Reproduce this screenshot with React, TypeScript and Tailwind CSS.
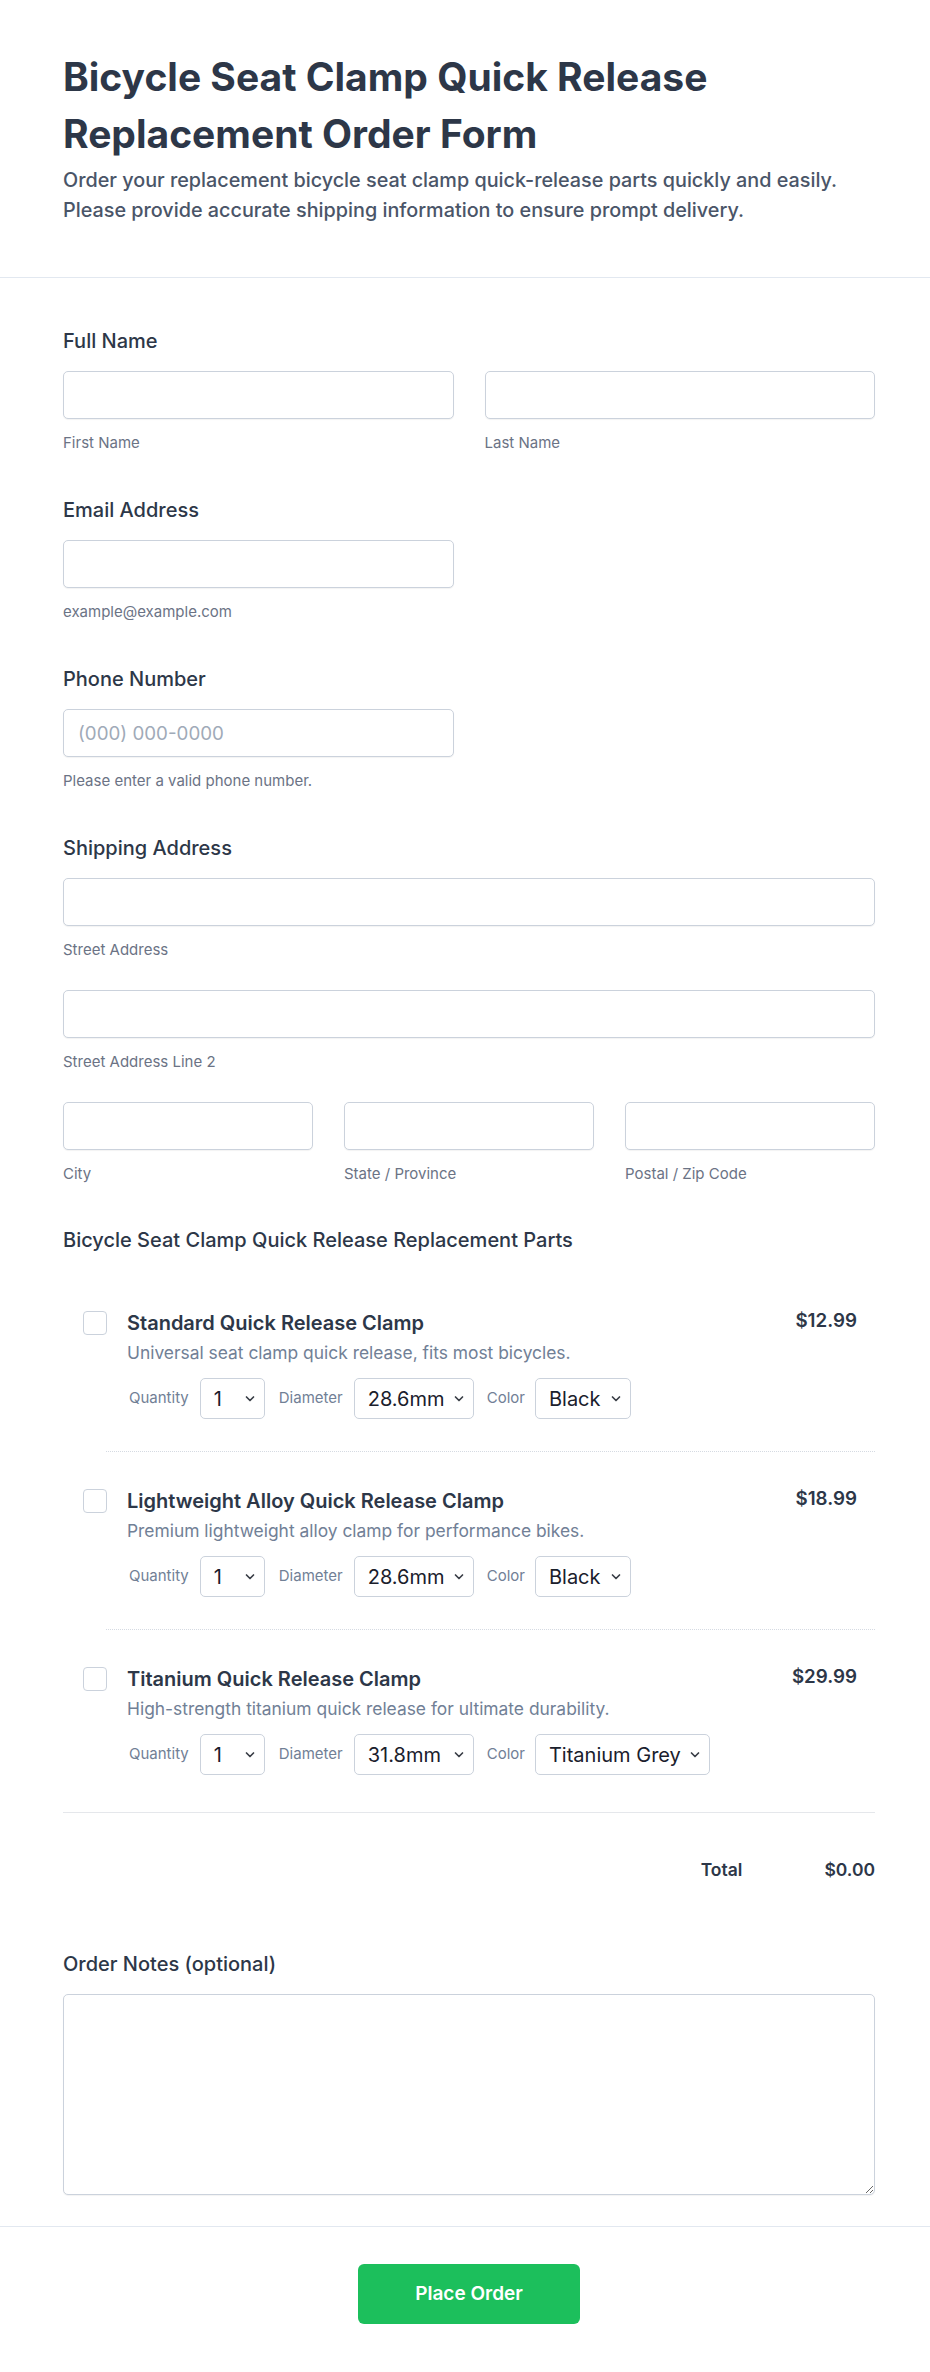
import React from "react";

type Part = {
  id: string;
  name: string;
  description: string;
  price: string;
  diameter: string;
  color: string;
  colorWidth: string;
};

const parts: Part[] = [
  {
    id: "standard",
    name: "Standard Quick Release Clamp",
    description: "Universal seat clamp quick release, fits most bicycles.",
    price: "$12.99",
    diameter: "28.6mm",
    color: "Black",
    colorWidth: "w-[96px]",
  },
  {
    id: "alloy",
    name: "Lightweight Alloy Quick Release Clamp",
    description: "Premium lightweight alloy clamp for performance bikes.",
    price: "$18.99",
    diameter: "28.6mm",
    color: "Black",
    colorWidth: "w-[96px]",
  },
  {
    id: "titanium",
    name: "Titanium Quick Release Clamp",
    description: "High-strength titanium quick release for ultimate durability.",
    price: "$29.99",
    diameter: "31.8mm",
    color: "Titanium Grey",
    colorWidth: "w-[175px]",
  },
];

const inputCls =
  "block h-12 w-full rounded-[5px] border border-[#cbd2dc] bg-white px-[14px] text-[18.75px] text-[#1a202c] shadow-[0_1px_1px_rgba(0,0,0,0.05)] outline-none placeholder:text-[#a0aab8]";

function Label({ children }: { children: React.ReactNode }) {
  return (
    <div className="mb-[15px] text-[20px] font-medium leading-[30px] text-[#2d3748]">
      {children}
    </div>
  );
}

function Sub({ children }: { children: React.ReactNode }) {
  return <div className="mt-[13px] text-[15px] leading-[22px] text-[#6b7385]">{children}</div>;
}

function Chevron() {
  return (
    <svg width="10" height="7" viewBox="0 0 10 7" fill="none" className="text-[#3a3f47]">
      <path d="M1.5 1.5 5 5l3.5-3.5" stroke="currentColor" strokeWidth="1.7" strokeLinecap="round" strokeLinejoin="round" />
    </svg>
  );
}

function Select({ value, options, width }: { value: string; options: string[]; width: string }) {
  return (
    <div className={`relative ${width}`}>
      <select
        defaultValue={value}
        className="block h-[41px] w-full appearance-none rounded-[5px] border border-[#cbd2dc] bg-white pl-[13px] pr-[26px] text-[20px] text-[#1a202c] outline-none"
      >
        {options.map((o) => (
          <option key={o}>{o}</option>
        ))}
      </select>
      <span className="pointer-events-none absolute right-[10px] top-1/2 -translate-y-1/2">
        <Chevron />
      </span>
    </div>
  );
}

function PartRow({ part, index }: { part: Part; index: number }) {
  const isLast = index === parts.length - 1;
  return (
    <div className={isLast ? "" : "border-b border-dotted border-[#d5dae2] ml-[43px]"}>
      <div className={`flex gap-5 pt-[35px] pb-[32px] pr-[18px] ${isLast ? "pl-5" : "-ml-[23px]"}`}>
        <input
          type="checkbox"
          className="mt-[2px] h-6 w-6 shrink-0 appearance-none rounded-[4px] border border-[#cbd2dc] bg-white"
        />
        <div className="flex-1">
          <div className="flex items-start justify-between">
            <div className="text-[20px] font-semibold leading-[28px] text-[#2d3748]">{part.name}</div>
            <div className="text-[18.75px] font-semibold leading-[24px] text-[#2d3748]">{part.price}</div>
          </div>
          <div className="mt-[2px] text-[17.4px] leading-[28px] text-[#718096]">{part.description}</div>
          <div className="mt-[11px] flex items-center text-[15px] text-[#718096]">
            <span className="ml-[2px] mr-[11px]">Quantity</span>
            <Select value="1" options={["1", "2", "3", "4", "5"]} width="w-[65px]" />
            <span className="ml-[14px] mr-[11px]">Diameter</span>
            <Select value={part.diameter} options={["25.4mm", "28.6mm", "31.8mm", "34.9mm"]} width="w-[120px]" />
            <span className="ml-[13px] mr-[10px]">Color</span>
            <Select
              value={part.color}
              options={part.color === "Black" ? ["Black", "Silver", "Red"] : ["Titanium Grey", "Natural"]}
              width={part.colorWidth}
            />
          </div>
        </div>
      </div>
    </div>
  );
}

export default function App() {
  return (
    <div className="min-h-[2372px] bg-white font-[family-name:Inter,sans-serif] text-[#2d3748]">
      <header className="border-b border-[#e2e8f0] pb-[52px] pl-[63px] pr-[55px] pt-12">
        <h1 className="text-[39px] font-bold leading-[57px] text-[#2d3748]">
          Bicycle Seat Clamp Quick Release
          <br />
          Replacement Order Form
        </h1>
        <p className="mt-[3px] text-[19.8px] font-medium leading-[30px] text-[#4a5568]">
          Order your replacement bicycle seat clamp quick-release parts quickly and easily.
          <br />
          Please provide accurate shipping information to ensure prompt delivery.
        </p>
      </header>

      <form className="pb-[31px] pl-[63px] pr-[55px] pt-12" onSubmit={(e) => e.preventDefault()}>
        <div className="flex flex-col gap-[41px]">
          <div>
            <Label>Full Name</Label>
            <div className="grid grid-cols-2 gap-x-[31px]">
              <div>
                <input className={inputCls} />
                <Sub>First Name</Sub>
              </div>
              <div>
                <input className={inputCls} />
                <Sub>Last Name</Sub>
              </div>
            </div>
          </div>

          <div>
            <Label>Email Address</Label>
            <div className="grid grid-cols-2 gap-x-[31px]">
              <div>
                <input type="email" className={inputCls} />
                <Sub>example@example.com</Sub>
              </div>
            </div>
          </div>

          <div>
            <Label>Phone Number</Label>
            <div className="grid grid-cols-2 gap-x-[31px]">
              <div>
                <input type="tel" placeholder="(000) 000-0000" className={inputCls} />
                <Sub>Please enter a valid phone number.</Sub>
              </div>
            </div>
          </div>

          <div>
            <Label>Shipping Address</Label>
            <div className="flex flex-col gap-[29px]">
              <div>
                <input className={inputCls} />
                <Sub>Street Address</Sub>
              </div>
              <div>
                <input className={inputCls} />
                <Sub>Street Address Line 2</Sub>
              </div>
              <div className="grid grid-cols-3 gap-x-[31px]">
                <div>
                  <input className={inputCls} />
                  <Sub>City</Sub>
                </div>
                <div>
                  <input className={inputCls} />
                  <Sub>State / Province</Sub>
                </div>
                <div>
                  <input className={inputCls} />
                  <Sub>Postal / Zip Code</Sub>
                </div>
              </div>
            </div>
          </div>

          <div>
            <div className="text-[20px] font-medium leading-[28px] text-[#2d3748]">
              Bicycle Seat Clamp Quick Release Replacement Parts
            </div>
            <div className="mt-[20px] border-b border-[#e5e7eb] pb-[5px]">
              {parts.map((p, i) => (
                <PartRow key={p.id} part={p} index={i} />
              ))}
            </div>
            <div className="flex justify-end gap-[82px] pt-[44px] text-[17.5px] font-semibold leading-[26px] text-[#2d3748]">
              <span>Total</span>
              <span>$0.00</span>
            </div>
          </div>
        </div>

        <div className="mt-[66px]">
          <Label>Order Notes (optional)</Label>
          <textarea className="block h-[201px] w-full rounded-[5px] border border-[#cbd2dc] bg-white px-[14px] py-[10px] text-[18px] shadow-[0_1px_1px_rgba(0,0,0,0.05)] outline-none" />
        </div>
      </form>

      <footer className="flex justify-center border-t border-[#e2e8f0] pb-[49px] pl-[63px] pr-[55px] pt-[37px]">
        <button
          type="button"
          className="h-[60px] w-[222px] rounded-[6px] bg-[#1cbf5c] text-[19px] font-semibold text-white"
        >
          Place Order
        </button>
      </footer>
    </div>
  );
}
